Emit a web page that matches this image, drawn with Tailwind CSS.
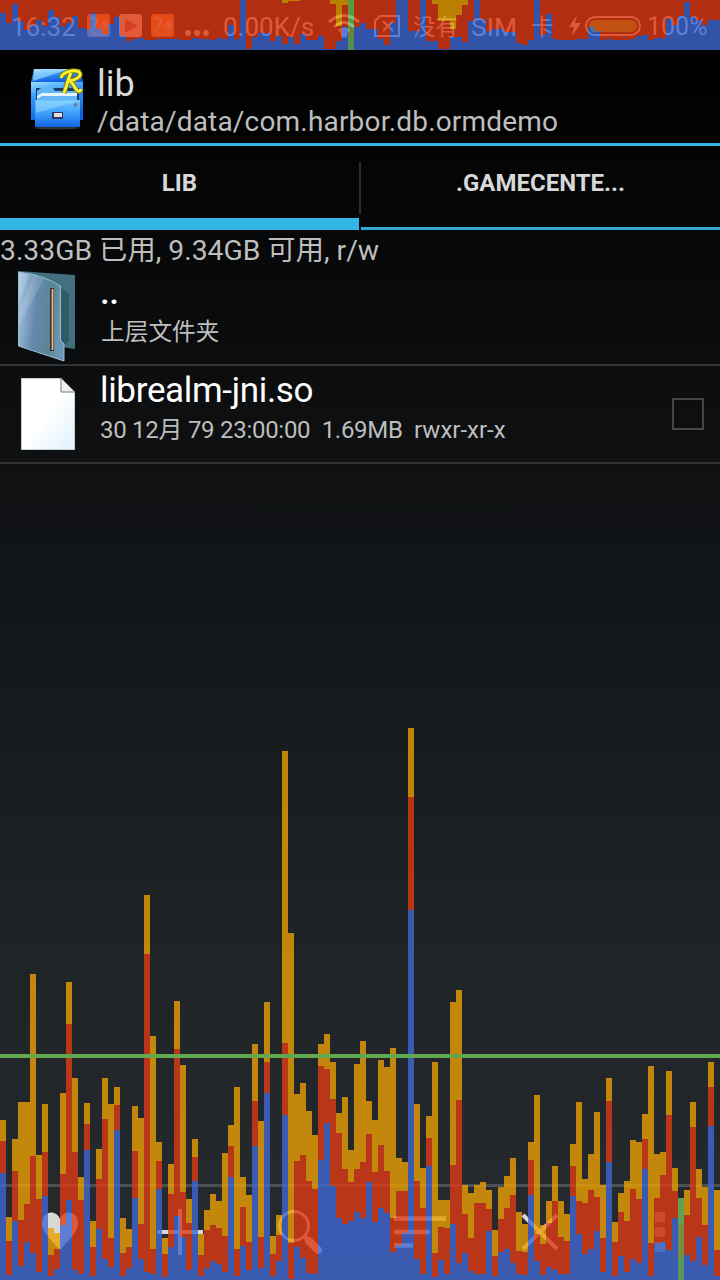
<!DOCTYPE html>
<html lang="zh"><head><meta charset="utf-8"><title>Root Explorer</title>
<script src="https://cdn.jsdelivr.net/npm/@tailwindcss/browser@4"></script></head>
<body class="bg-black">
<div class="relative flex flex-col w-[720px] h-[1280px] overflow-hidden font-[Roboto,'Noto_Sans_CJK_SC',sans-serif] text-[#bebebe] bg-[linear-gradient(to_bottom,#000_4%,#0f1113_37%,#1f2427_75%,#272b30)]">
<header class="h-[50px] shrink-0 bg-black">
<div class="flex items-center h-[52px] pl-3 pr-3 text-[26px] text-[#dedede] whitespace-nowrap">
<span class="w-[75px] pt-[2px] -ml-px mr-px">16:32</span>
<svg class="shrink-0 -mt-px" width="88" height="24" viewBox="0 0 88 24"><rect width="23" height="23" rx="3" fill="#ff8a20"/><rect x="32" width="23" height="23" rx="3" fill="#f5dcdc"/><path d="M38 5l13 6.500-13 7z" fill="#b06050"/><rect x="64" width="23" height="23" rx="3" fill="#ff8a20"/><g id="sq"><path d="M4 5C6 3 10 4 10 7C10 10 6 10 8 13" fill="none" stroke="#f4c8a0" stroke-width="3"/><path d="M12 11C14 11 16 9 17 5L21 9L19 11H22C21 15 18 17 15 17V14z" fill="#f4c8a0"/><circle cx="10" cy="17" r="3.500" fill="none" stroke="#f4c8a0" stroke-width="1.500"/><path d="M5 12C3 16 4 20 7 21M13 20.500H20" fill="none" stroke="#f4c8a0" stroke-width="1.500"/></g><use href="#sq" x="64"/></svg>
<svg class="ml-[10px] shrink-0" width="26" height="27" fill="#dedede"><circle cx="3" cy="20" r="3"/><circle cx="12" cy="20" r="3"/><circle cx="21" cy="20" r="3"/></svg>
<span class="ml-[12px] w-[104px] pt-[2px]">0.00K/s</span>
<svg class="shrink-0" width="34" height="26" viewBox="0 0 34 26" fill="none" stroke="#dedede" stroke-width="3"><path d="M2 9Q17-4 32 9M7 14Q17 5 27 14M12 18Q17 14 22 18"/><circle cx="17" cy="21" r="2" fill="#dedede"/></svg>
<svg class="ml-[13px] shrink-0" width="26" height="22" viewBox="0 0 26 22" fill="none" stroke="#dedede" stroke-width="2"><path d="M6 1H25V21H1V6zM9 6l10 10M19 6L9 16"/></svg>
<span class="ml-[13px] w-[153px] leading-[30px] flex pt-[2px]"><span class="w-[58px] text-[22.500px]">没有</span><span class="w-[60px] text-[26.500px]">SIM</span><span class="text-[22.500px]">卡</span></span>
<svg class="ml-[2px] shrink-0" width="75" height="22" viewBox="0 0 75 22"><path d="M9 0L1 12h5l-2 9L13 8H7z" fill="#dedede"/><rect x="18" y="2" width="54" height="18" rx="9" fill="none" stroke="#dedede" stroke-width="2"/><rect x="21" y="5" width="48" height="12" rx="6" fill="#4dae00"/></svg>
<span class="ml-[4px] pt-[2px] text-[25px]">100%</span>
</div></header>
<section class="flex h-[96px] shrink-0 border-b-[3px] border-[#33b5e5]">
<svg class="ml-[30px] mt-[17px] shrink-0" width="56" height="64" viewBox="0 0 56 64"><defs><linearGradient id="cab" x2=".3" y2="1"><stop stop-color="#9de0ff"/><stop offset=".35" stop-color="#399dfa"/><stop offset="1" stop-color="#0f60df"/></linearGradient><linearGradient id="dr" x2="0" y2="1"><stop stop-color="#72c7ff"/><stop offset=".5" stop-color="#3b9ffa"/><stop offset="1" stop-color="#1264e3"/></linearGradient></defs><ellipse cx="27" cy="61" rx="23" ry="1.500" fill="#333"/><path d="M4 2H50L53 15H1z" fill="url(#cab)"/><path d="M4 2H40L3 14z" fill="#b8e8ff" opacity=".6"/><path d="M1 15H53V53H1z" fill="url(#cab)"/><path d="M6 21H49V34H6z" fill="#153b72"/><path d="M7 24l4-3h12l2 3h22v10H7z" fill="#63b7f4"/><path d="M7 29l5-3h35v3H12l-5 3z" fill="#e3f6ff"/><path d="M5 33H50V60H5z" fill="url(#dr)"/><path d="M6 34h43L6 46z" fill="#95dcff" opacity=".5"/><rect x="22" y="45" width="11" height="7" fill="#353565"/><rect x="24" y="46" width="8" height="4" fill="#ddd"/><circle cx="45.500" cy="38" r="2" fill="#777c9a"/><path id="r" d="M31 11c1-6 13-9 18-6 4 4-3 8-10 9 4 0 6 9 9 10 2 1 3-1 3-2M41 6c-3 5-4 13-7 20" fill="none" stroke="#79770d" stroke-width="5"/><path d="M31 11c1-6 13-9 18-6 4 4-3 8-10 9 4 0 6 9 9 10 2 1 3-1 3-2M41 6c-3 5-4 13-7 20" fill="none" stroke="#fff22c" stroke-width="3"/></svg>
<div class="ml-[11px] pt-[14px] whitespace-nowrap"><div class="text-[36px] leading-[40px] text-[#dadada]">lib</div><div class="text-[28px] leading-[36px] tracking-[0.190px]">/data/data/com.harbor.db.ormdemo</div></div>
</section>
<nav class="flex h-[84px] shrink-0 text-[24px] font-bold text-[#d8d8d8]">
<div class="w-[359px] border-b-[12px] border-[#33b5e5] text-center pt-[19px]">LIB</div>
<div class="w-[2px] h-[52px] mt-[16px] bg-[#292a2b]"></div>
<div class="flex-1 border-b-[3px] border-[#33a5d5] text-center pt-[19px]">.GAMECENTE...</div>
</nav>
<div class="h-[40px] shrink-0 text-[28.300px] leading-[42px] whitespace-nowrap">3.33GB 已用, 9.34GB 可用, r/w</div>
<main class="flex flex-col">
<div class="flex h-[96px] border-b-2 border-[#303234]">
<svg class="ml-[17px] shrink-0" width="63" height="92" viewBox="0 0 63 92"><defs><linearGradient id="fold" x2="1" y2=".2"><stop stop-color="#aec9e5"/><stop offset=".45" stop-color="#6288ad"/><stop offset=".8" stop-color="#5b8594"/><stop offset="1" stop-color="#6b98b7"/></linearGradient></defs><path d="M1 1L58 5V79L45 77z" fill="#43707f"/><path d="M43 17L52 24V72L43 77z" fill="#315a64"/><path d="M1.500 2Q27 5 43.500 16V70L47 74V91L1.500 76z" fill="url(#fold)" stroke="#9abdce"/><path d="M2 3L12 5 2 32zM17 5l10 4L2 55v-13z" fill="#fff" opacity=".14"/><path d="M35 18v63" stroke="#2a3338" stroke-width="4"/><path d="M35.500 19v61" stroke="#f0bb76" stroke-width="1.800"/></svg>
<div class="ml-[20px] pt-[5px]"><div class="text-[35px] text-white leading-[36px] font-medium tracking-[-0.500px]">..</div><div class="pl-px text-[23.700px] leading-[42px]">上层文件夹</div></div>
</div>
<div class="flex h-[98px] border-b-2 border-[#303234]">
<svg class="ml-[20px] mt-[11px] shrink-0" width="56" height="74" viewBox="0 0 56 74"><defs><linearGradient id="paper" x2="1" y2="1"><stop offset=".5" stop-color="#fff"/><stop offset="1" stop-color="#dff1fc"/></linearGradient></defs><path d="M1.500 1.500H41L54.500 15V72.500H1.500z" fill="url(#paper)" stroke="#c6d1d4"/><path d="M41 1V15H55z" fill="#f1f1f1" stroke="#777"/></svg>
<div class="ml-[24px] pt-[5px] whitespace-nowrap"><div class="text-[35px] leading-[40px] tracking-[-0.330px] text-white">librealm-jni.so</div><div class="text-[24px] leading-[38px] whitespace-pre"><span class="tracking-[-0.280px]">30 12月 79 23:00:00  1.69MB  </span><span>rwxr-xr-x</span></div></div>
<div class="ml-auto mr-[16px] mt-[32px] w-[32px] h-[32px] border-2 border-[#444546]"></div>
</div></main>
<footer class="mt-auto h-[96px] shrink-0 border-t-[3px] border-[#4e5154]">
<svg width="720" height="93" viewBox="0 1187 720 93" fill="none" stroke="#d8d8d8"><path d="M60 1250C53 1242 42 1233 42 1223C42 1211 56 1209 60 1219C64 1209 78 1211 78 1223C78 1233 67 1242 60 1250z" fill="#d8d8d8" stroke="none"/><path d="M157 1232H203M180 1209V1255" stroke-width="4"/><circle cx="294" cy="1226" r="14.500" stroke-width="3"/><path d="M304 1236l6 6" stroke-width="4"/><path d="M309 1241l9 9" stroke-width="8" stroke-linecap="round"/><path d="M394 1218.500H446M394 1232H430M394 1245.500H413" stroke-width="4.500"/><path d="M523 1215L557 1249M557 1215L523 1249" stroke-width="4"/><path d="M655 1212h10v10h-10zM655 1227h10v10h-10zM655 1242h10v10h-10z" fill="#8f8f8f" stroke="none"/></svg>
</footer>
<svg id="profile" class="absolute inset-0 pointer-events-none" width="720" height="1280" shape-rendering="crispEdges"></svg>
</div>
<script>
// Frame timings: top edge of the orange, red and blue parts of each bar, in thirds of a pixel from y=960
const frames=`480,543,640 771,843,945 537,633,784 426,780,918 426,732,846 42,588,880 585,717,935 432,576,708 804,885,948 819,867,928 399,642,796 66,192,720 354,576,930 651,720,942 429,492,570 783,861,948 567,657,808 354,477,898 432,834,922 381,435,510 774,879,948 807,861,924 438,573,714 474,792,898 -195,-18,936 228,867,942 546,603,688 834,882,951 612,702,862 123,267,768
315,696,832 717,789,930 537,591,664 822,885,948 750,810,924 702,795,904 723,804,912 579,828,936 495,558,652 381,867,948 651,741,858 705,846,930 252,423,558 483,831,924 126,306,400 828,882,948 765,825,904 -627,249,466 -81,849,958 402,603,862 369,585,894 453,663,940 525,687,942 252,318,600 222,327,490 306,417,678 459,519,774 411,627,792 570,666,784 312,627,756
243,606,774 423,522,666 480,636,786 300,555,744 321,633,760 264,774,876 594,693,856 606,693,820 -696,-489,-150 432,663,898 624,744,942 468,534,618 306,879,951 720,801,900 720,804,942 126,615,792 90,420,910 675,762,880 699,834,934 675,729,942 666,729,942 690,747,814 810,888,948 681,777,876 648,744,868 594,705,910 756,873,942 792,876,946 546,600,706 405,822,904
795,852,946 723,789,922 618,723,930 723,831,942 762,843,942 552,618,708 426,723,822 657,729,882 582,690,868 456,711,814 675,834,936 354,423,606 786,846,948 699,756,888 663,783,936 540,687,898 546,717,910 462,537,628 318,849,948 582,714,850 576,645,846 333,465,870 624,693,774 714,792,893 690,765,886 426,501,904 627,714,832 681,795,916 306,381,498 690,870,948`.split(/\s+/).map(s=>s.split(',').map(v=>960+v/3));
const bar=[40,70,12,64,90,74,60,78,30,52,78,70,48,84,88,40,88,102,72,52,108,124,118,114,120,120,118,118,118,118,120,120,114,118,118,120,114,118,76,118,0,148,112,100,100,124,108,132,110,132,102,120,120,108,148,148,124,80,0,82,70,88,88,118,136,70,0,0,94,94,0,122,122,148,148,110,112,126,64,0,58,94,88,88,96,96,130,136,120,0,106,42,118,120,120,120,118,118,82,94,120,118,120,120,120,118,108,106,120,114,114,58,76,48,6,50,60,74,60,60];
const amber={47:10,48:3,49:3,55:12,56:78,57:14,72:12,73:62,74:62,75:88,76:46,77:16};
const C=['#ea9f03','#df3a14','#4068d2'];
let out='';
const r=(x,y,b,c)=>{if(b>y)out+=`<rect x="${x}" y="${y}" width="6" height="${b-y}" fill="${c}"/>`};
const g=['#6ec05a','#84a84a','#64b267'];
frames.forEach((f,i)=>{const c=i===113?g:C;const t=f.map(Math.round);r(i*6,t[0],t[1],c[0]);r(i*6,t[1],t[2],c[1]);r(i*6,t[2],1280,c[2])});
bar.forEach((b,i)=>{const x=i*6;b=Math.round(b/3);const a=Math.round((amber[i]||0)/3);if(i===58){r(x,0,27,'#6ec05a');r(x,27,38,'#84a84a');r(x,38,50,'#64b267');return}
r(x,0,a,C[0]);r(x,a,b,C[1]);r(x,Math.max(a,b),50,C[2])});
document.getElementById('profile').innerHTML=`<g opacity=".8">${out}</g><rect y="1054" width="720" height="4" fill="#62a84e"/>`;
</script>
</body></html>
